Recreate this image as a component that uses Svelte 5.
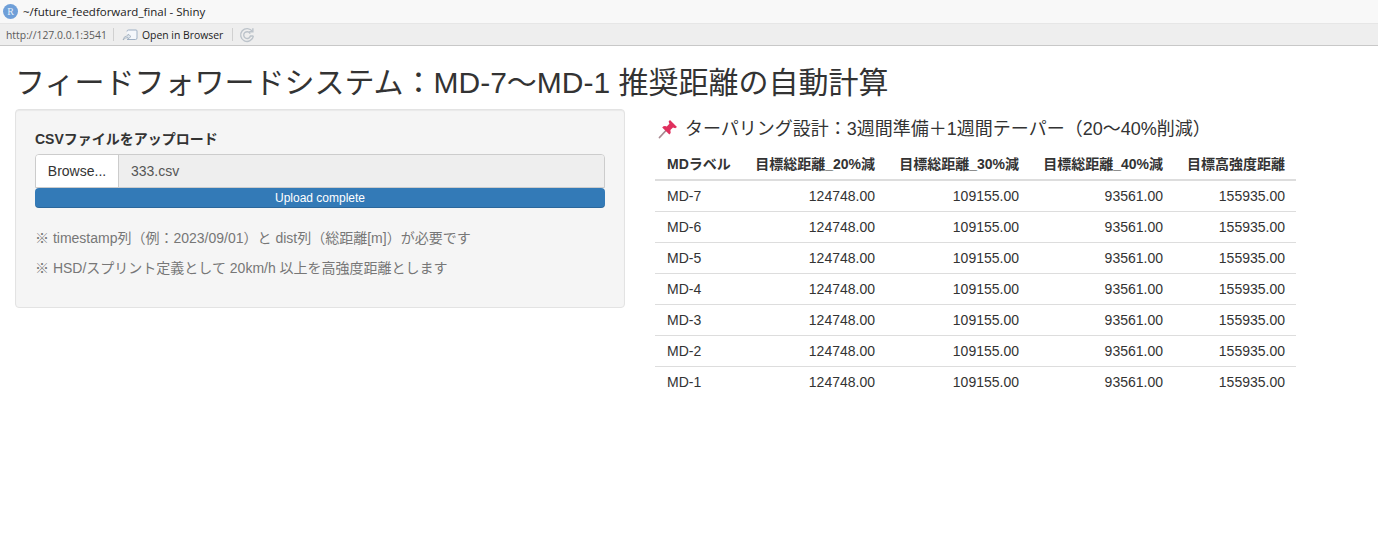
<script>
  const rows = ['MD-7', 'MD-6', 'MD-5', 'MD-4', 'MD-3', 'MD-2', 'MD-1'];
</script>

<div class="window">
  <div class="titlebar">
    <span class="r-badge">R</span>
    <span class="title">~/future_feedforward_final - Shiny</span>
  </div>
  <div class="toolbar">
    <span class="url">http://127.0.0.1:3541</span>
    <span class="sep"></span>
    <svg class="open-icon" width="16" height="14" viewBox="0 0 16 14">
      <path d="M5 3.5 Q5 2 6.5 2 H14 Q15 2 15 3 V10 Q15 11.5 13.5 11.5 H5" fill="#f4f7fb" stroke="#9fb0c4" stroke-width="1" />
      <path d="M1 12 Q1.5 8 6 7.5 V6 L9 8.5 L6 11 V9.5 Q3 9.5 1 12 Z" fill="#dfe6ee" stroke="#9aa7b5" stroke-width="0.7" />
    </svg>
    <span class="open">Open in Browser</span>
    <span class="sep"></span>
    <svg class="refresh" width="16" height="16" viewBox="0 0 15 15" fill="none" stroke="#bcc3ca" stroke-width="1.3">
      <path d="M12.6 4.2 A6 6 0 1 0 13.5 8.5" />
      <path d="M10.5 6.2 A3.2 3.2 0 1 0 10.7 8.5 H13.5" />
      <path d="M9.5 4.5 H13 V1.2" />
    </svg>
  </div>

  <main class="page">
    <h2>フィードフォワードシステム：MD-7〜MD-1 推奨距離の自動計算</h2>
    <div class="row">
      <section class="well">
        <label class="label" for="csv">CSVファイルをアップロード</label>
        <div class="input-group">
          <span class="btn">Browse...</span>
          <span class="file" id="csv">333.csv</span>
        </div>
        <div class="progress">Upload complete</div>
        <p class="note first">※ timestamp列（例：2023/09/01）と dist列（総距離[m]）が必要です</p>
        <p class="note">※ HSD/スプリント定義として 20km/h 以上を高強度距離とします</p>
      </section>

      <section class="results">
        <h4>
          <svg class="pin" width="20" height="20" viewBox="0 0 20 20">
            <path d="M1.5 18.5 L8 11.5" stroke="#a98a92" stroke-width="1.8" stroke-linecap="round" />
            <path d="M12 1 L19 8 L17.2 9.2 L15 8.4 L12.4 11 Q13.4 14 11.4 15.6 L4.2 8.4 Q6 6.4 8.8 7.4 L11.4 4.8 L10.6 2.6 Z" fill="#e0305e" />
          </svg>
          <span>ターパリング設計：3週間準備＋1週間テーパー（20〜40%削減）</span>
        </h4>
        <table>
          <thead>
            <tr>
              <th class="left">MDラベル</th>
              <th>目標総距離_20%減</th>
              <th>目標総距離_30%減</th>
              <th>目標総距離_40%減</th>
              <th>目標高強度距離</th>
            </tr>
          </thead>
          <tbody>
            {#each rows as md}
              <tr>
                <td class="left">{md}</td>
                <td>124748.00</td>
                <td>109155.00</td>
                <td>93561.00</td>
                <td>155935.00</td>
              </tr>
            {/each}
          </tbody>
        </table>
      </section>
    </div>
  </main>
</div>

<style>
  :global(body) {
    background: #fff;
  }

  .window {
    font-family: "Liberation Sans", "Noto Sans CJK JP", sans-serif;
    font-size: 14px;
    color: #333;
    height: 552px;
    overflow: hidden;
  }

  .titlebar {
    height: 23px;
    background: #f8f8f8;
    display: flex;
    align-items: center;
    padding-left: 3px;
    gap: 5px;
    font-family: "Open Sans", "Noto Sans", sans-serif;
    font-size: 11.5px;
    color: #222;
  }

  .r-badge {
    width: 15px;
    height: 15px;
    border-radius: 50%;
    background: #6f9fd8;
    color: #e8f0fa;
    font-family: "Liberation Serif", serif;
    font-size: 10px;
    line-height: 15px;
    text-align: center;
  }

  .toolbar {
    height: 21px;
    background: #eeeeee;
    border-bottom: 1px solid #c8c8c8;
    border-top: 1px solid #e6e6e6;
    display: flex;
    align-items: center;
    padding-left: 6px;
    font-family: "Open Sans", "Noto Sans", sans-serif;
    font-size: 10.4px;
    color: #333;
  }

  .url {
    color: #5b5b5b;
    width: 107px;
  }

  .sep {
    width: 1px;
    height: 13px;
    background: #d0d0d0;
  }

  .open-icon {
    margin-left: 8px;
    margin-right: 4px;
  }

  .open {
    width: 90px;
    color: #222;
  }

  .refresh {
    margin-left: 6px;
  }

  .page {
    padding: 0 15px;
  }

  h2 {
    font-size: 30px;
    font-weight: 400;
    line-height: 33px;
    margin: 20px 0 10px 0;
    color: #333;
    white-space: nowrap;
  }

  .row {
    display: flex;
    align-items: flex-start;
  }

  .well {
    width: 610px;
    box-sizing: border-box;
    height: 199px;
    background: #f5f5f5;
    border: 1px solid #e3e3e3;
    border-radius: 4px;
    box-shadow: inset 0 1px 1px rgba(0, 0, 0, 0.05);
    padding: 19px;
    flex-shrink: 0;
  }

  .label {
    display: block;
    font-weight: 700;
    line-height: 20px;
    margin-bottom: 5px;
  }

  .input-group {
    display: flex;
    height: 34px;
    box-sizing: border-box;
    border: 1px solid #ccc;
    border-radius: 4px 4px 0 0;
    overflow: hidden;
  }

  .btn {
    width: 83px;
    box-sizing: border-box;
    background: #fff;
    border-right: 1px solid #ccc;
    text-align: center;
    line-height: 32px;
  }

  .file {
    flex: 1;
    background: #eeeeee;
    color: #555;
    line-height: 32px;
    padding-left: 12px;
  }

  .progress {
    height: 20px;
    background: #337ab7;
    color: #fff;
    font-size: 12px;
    line-height: 20px;
    text-align: center;
    border-radius: 4px;
    box-shadow: inset 0 -1px 0 rgba(0, 0, 0, 0.15);
  }

  .note {
    margin: 0 0 10px;
    line-height: 20px;
    color: #777;
    white-space: nowrap;
  }

  .note.first {
    margin-top: 20px;
  }

  .results {
    margin-left: 30px;
    width: 641px;
    flex-shrink: 0;
  }

  h4 {
    font-size: 18px;
    font-weight: 400;
    line-height: 20px;
    margin: 10px 0 9px 3px;
    display: flex;
    align-items: center;
    gap: 7px;
    white-space: nowrap;
  }

  .pin {
    flex-shrink: 0;
  }

  table {
    width: 100%;
    border-collapse: collapse;
    table-layout: fixed;
  }

  th,
  td {
    box-sizing: border-box;
    padding: 0 11px 0 0;
    text-align: right;
    white-space: nowrap;
  }

  th {
    font-weight: 700;
    height: 32px;
    padding-bottom: 2px;
    border-bottom: 2px solid #ddd;
  }

  td {
    height: 31px;
    border-top: 1px solid #ddd;
  }

  tbody tr:first-child td {
    border-top: 0;
  }

  th.left,
  td.left {
    text-align: left;
    padding-left: 12px;
    width: 88px;
  }

  th:nth-child(2) {
    width: 143px;
  }

  th:nth-child(3),
  th:nth-child(4) {
    width: 144px;
  }

  th:nth-child(5) {
    width: 122px;
  }
</style>
